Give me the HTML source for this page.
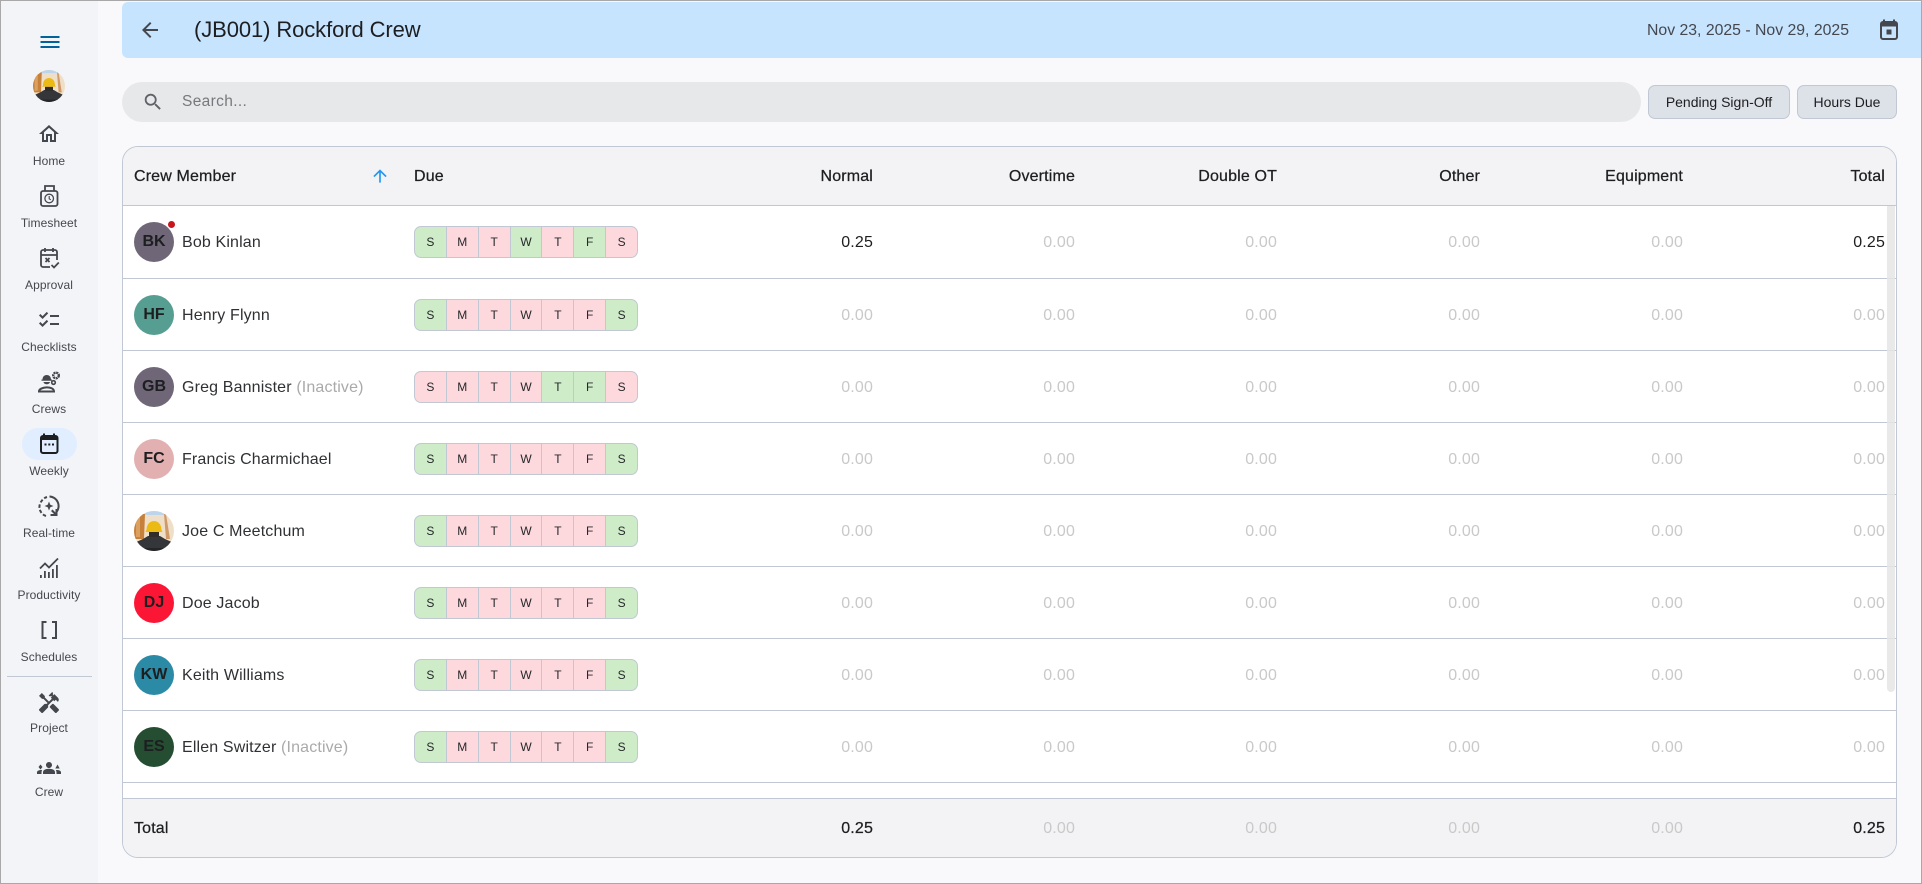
<!DOCTYPE html>
<html><head><meta charset="utf-8"><title>Weekly</title>
<style>
*{box-sizing:border-box}
html,body{margin:0;padding:0;width:1922px;height:884px;overflow:hidden;background:#f9f9fb;font-family:"Liberation Sans",sans-serif;color:#1d1e20}
.a{position:absolute}
#frame{position:absolute;left:0;top:0;width:1922px;height:884px;border:1px solid #a8a8a8;pointer-events:none;z-index:9}
#side{position:absolute;left:0;top:0;width:98px;height:884px;background:#f3f4f7}
.lab{position:absolute;left:0;width:98px;text-align:center;font-size:12px;line-height:14px;color:#44474e;letter-spacing:.08px;margin-top:1px}
.ic{position:absolute;left:37px;width:24px;height:24px;fill:#44474e}
.st{fill:none;stroke:#44474e;stroke-width:1.8}
#hd{position:absolute;left:122px;top:2px;width:1800px;height:56px;background:#c7e4ff;border-radius:6px 0 0 6px}
#tb{position:absolute;left:122px;top:146px;width:1775px;height:712px;border:1px solid #c1c8d3;border-radius:16px;background:#fff;overflow:hidden}
.hr{position:absolute;left:0;width:1775px;height:1px;background:#c1c8d3}
.row,.hrow{position:absolute;left:0;width:1773px;font-size:16px;letter-spacing:.15px}
.row{height:72px;line-height:74px}
.av{position:absolute;left:11px;top:16px;width:40px;height:40px;border-radius:50%;text-align:center;line-height:40px;font-size:16px;font-weight:700;letter-spacing:0;color:#1d1e20}
.nm{position:absolute;left:59px;top:0;white-space:nowrap;color:#303134;font-size:16px;letter-spacing:.15px}
.nm i{font-style:normal;color:#aaa}
.c{position:absolute;width:160px;text-align:right;color:#c9c9c9;top:0}
.c.d{color:#1d1e20}
.c1{left:590px}.c2{left:792px}.c3{left:994px}.c4{left:1197px}.c5{left:1400px}.c6{left:1602px}
.p{position:absolute;left:291px;top:20px;width:224px;height:32px;border:1px solid #c1c8d3;border-radius:7px;overflow:hidden;display:flex;line-height:31px;font-size:12px;letter-spacing:0;color:#26282b;background:#c1c8d3}
.p span{flex:1;text-align:center;background:#fdd9de;margin-right:1px}
.p span:last-child{margin-right:0}
.p .g{background:#ceecc8}
.hrow{height:58px;line-height:60px;color:#1d1e20;letter-spacing:.15px;-webkit-text-stroke:.25px #1d1e20}
.hrow .c{color:#1d1e20}
.hrow .z{color:#c9c9c9;-webkit-text-stroke:0}
.btn{position:absolute;top:85px;height:34px;line-height:32px;background:#dde1e8;border:1px solid #c1c8d3;border-radius:7px;text-align:center;font-size:14px;color:#1d1e20}
</style></head><body>

<svg width="0" height="0" style="position:absolute"><defs><clipPath id="cp"><circle cx="20" cy="20" r="20"/></clipPath>
<g id="ph"><g clip-path="url(#cp)"><rect width="40" height="40" fill="#f0dfc8"/><rect width="40" height="4" fill="#bcd5ea"/><path d="M0 3h11l-1 25H0z" fill="#c6803a"/><path d="M2 6h4v20H2z" fill="#dba060"/><path d="M30 3h2l4 25h-4z" fill="#cf9a6a"/><path d="M0 40V32l9-4 5-3h12l5 3 9 4v8z" fill="#34363a"/><path d="M0 40v-3h40v3z" fill="#232529"/><path d="M15 26h10v-5H15z" fill="#2f2c29"/><path d="M12.500 19c0-12 15-12 15 0l1 2H11.500z" fill="#ecba14"/></g></g></defs></svg>

<div id="side">
<svg class="ic" style="top:30px;left:37.500px;fill:#00639b" viewBox="0 0 24 24"><path d="M2.500 18h19v-2h-19zM2.500 13h19v-2h-19zM2.500 6v2h19V6z"/></svg>
<svg class="a" style="left:33px;top:70px" width="32" height="32" viewBox="0 0 40 40"><use href="#ph"/></svg>

<svg class="ic" style="top:122px" viewBox="0 0 24 24"><path d="M12 5.690l5 4.500V18h-2v-6H9v6H7v-7.810l5-4.500M12 3L2 12h3v8h6v-6h2v6h6v-8h3L12 3z"/></svg>
<div class="lab" style="top:153px">Home</div>

<svg class="ic" style="top:184px" viewBox="0 0 24 24"><rect x="4" y="7" width="16.500" height="15" rx="2" class="st"/><path d="M8 7V2h9v5" class="st"/><circle cx="12.200" cy="14.500" r="4.300" fill="none" stroke="#44474e" stroke-width="1.300"/><path d="M12.200 12v2.800l1.600 1" fill="none" stroke="#44474e" stroke-width="1.100"/></svg>
<div class="lab" style="top:215px">Timesheet</div>

<svg class="ic" style="top:246px" viewBox="0 0 24 24"><path d="M13 21H6a2 2 0 0 1-2-2V6a2 2 0 0 1 2-2h12a2 2 0 0 1 2 2v8M4 9h16M8 2v4M16 2v4" class="st"/><path d="M8.500 12l4 4m0-4l-4 4" class="st"/><path d="M14.500 19l2.500 2.500 4.800-5" class="st"/></svg>
<div class="lab" style="top:277px">Approval</div>

<svg class="ic" style="top:308px" viewBox="0 0 24 24"><path d="M22 7h-9v2h9V7zm0 8h-9v2h9v-2zM5.540 11L2 7.460l1.410-1.410 2.120 2.120 4.240-4.240 1.410 1.410L5.540 11zm0 8L2 15.460l1.410-1.410 2.120 2.120 4.240-4.240 1.410 1.410L5.540 19z"/></svg>
<div class="lab" style="top:339px">Checklists</div>

<svg class="ic" style="top:370px" viewBox="0 0 24 24"><path d="M5.500 9.500c0-6 8.500-6 8.500 0zM4.500 9.500h10.500v1.300H4.500zM6.500 12h6.500c-.5 3-6 3-6.500 0z"/><path d="M2 21.500c0-5 15-6 15 0z" fill="none" stroke="#44474e" stroke-width="2"/><circle cx="19" cy="5.500" r="2.800" fill="none" stroke="#44474e" stroke-width="2.400" stroke-dasharray="2 .6"/><circle cx="16.500" cy="12.500" r="1.800" fill="none" stroke="#44474e" stroke-width="1.600"/></svg>
<div class="lab" style="top:401px">Crews</div>

<div class="a" style="left:22px;top:428px;width:55px;height:32px;border-radius:16px;background:#e0eeff"></div>
<svg class="ic" style="top:432px" viewBox="0 0 24 24"><path d="M7 1.500v3.500M17 1.500v3.500" stroke="#1d1e20" stroke-width="2"/><rect x="4" y="4" width="16.500" height="17" rx="2" fill="none" stroke="#1d1e20" stroke-width="2"/><rect x="4" y="4" width="16.500" height="4" fill="#1d1e20"/><path d="M7.500 11.500h2v2h-2zM11.300 11.500h2v2h-2zM15 11.500h2v2h-2z" fill="#1d1e20"/></svg>
<div class="lab" style="top:463px">Weekly</div>

<svg class="ic" style="top:494px" viewBox="0 0 24 24"><path d="M12.500 2.500a9.500 9.500 0 0 1 6.500 16" fill="none" stroke="#44474e" stroke-width="2"/><path d="M9 22a9.500 9.500 0 0 1-4-15.500A9.500 9.500 0 0 1 10 3" fill="none" stroke="#44474e" stroke-width="2" stroke-dasharray="3.500 2"/><path d="M13.500 22h7v-7h-2v3.500l-3-3-1.500 1.500 3 3h-3.500zM12 7.500l1.300 3.200 3.200 1.300-3.200 1.300-1.300 3.200-1.300-3.200L7.500 12l3.200-1.300z"/></svg>
<div class="lab" style="top:525px">Real-time</div>

<svg class="ic" style="top:556px" viewBox="0 0 24 24"><path d="M3 12.500l5-5 4 4 9-9" fill="none" stroke="#44474e" stroke-width="1.800"/><path d="M3 19h1.800v3H3zM7 15h1.800v7H7zM11 16h1.800v6H11zM15 13h1.800v9H15zM19 9h1.800v13H19z"/></svg>
<div class="lab" style="top:587px">Productivity</div>

<svg class="ic" style="top:618px" viewBox="0 0 24 24"><path d="M9.500 4h-4v16h4M15 4h4v16h-4" fill="none" stroke="#44474e" stroke-width="2"/></svg>
<div class="lab" style="top:649px">Schedules</div>

<div class="a" style="left:7px;top:676px;width:85px;height:1px;background:#c1c8d3"></div>

<svg class="ic" style="top:691px" viewBox="0 0 24 24"><path d="M21.670 18.170l-5.300-5.300h-.99l-2.540 2.540v.99l5.300 5.300c.39.39 1.020.39 1.410 0l2.120-2.120c.39-.38.39-1.020 0-1.410z"/><path d="M17.340 10.190l1.410-1.410 2.120 2.120c1.170-1.170 1.170-3.070 0-4.240l-3.540-3.540-1.410 1.410V1.710l-.7-.71-3.540 3.540.71.71h2.830l-1.410 1.410 1.060 1.060-2.890 2.890-4.130-4.130V5.060L4.830 2.040 2 4.870 5.030 7.900h1.410l4.130 4.130-.85.85H7.600l-5.300 5.300c-.39.39-.39 1.020 0 1.410l2.120 2.120c.39.39 1.020.39 1.410 0l5.300-5.300v-2.120l5.150-5.150 1.060 1.050z"/></svg>
<div class="lab" style="top:720px">Project</div>

<svg class="ic" style="top:756px" viewBox="0 0 24 24"><path d="M3.500 8.500l2 2.500-2 2.500-2-2.500zM20.500 8.500l2.200 4h-4.400zM5.130 14.100c-.37-.06-.74-.1-1.130-.1-.99 0-1.930.21-2.780.58C.48 14.900 0 15.620 0 16.430V18h4.500v-1.610c0-.83.23-1.610.63-2.290zM24 16.430c0-.81-.48-1.530-1.220-1.850-.85-.37-1.790-.58-2.780-.58-.39 0-.76.04-1.130.1.4.68.63 1.460.63 2.290V18H24v-1.570zm-7.760-2.780c-1.170-.52-2.610-.9-4.240-.9-1.630 0-3.070.39-4.240.9C6.680 14.130 6 15.210 6 16.390V18h12v-1.610c0-1.180-.68-2.260-1.760-2.740zM12 12c1.660 0 3-1.340 3-3s-1.340-3-3-3-3 1.340-3 3 1.340 3 3 3z"/></svg>
<div class="lab" style="top:784px">Crew</div>
</div>

<div id="hd"></div>
<svg class="a" style="left:138px;top:18px;fill:#44474e" width="24" height="24" viewBox="0 0 24 24"><path d="M20 11H7.830l5.590-5.590L12 4l-8 8 8 8 1.410-1.410L7.830 13H20v-2z"/></svg>
<div class="a" style="left:194px;top:16px;font-size:22px;line-height:28px;color:#1d1e20;white-space:nowrap;letter-spacing:-.1px">(JB001) Rockford Crew</div>
<div class="a" style="left:1647px;top:21px;font-size:15.800px;line-height:20px;color:#44474e;white-space:nowrap">Nov 23, 2025 - Nov 29, 2025</div>
<svg class="a" style="left:1877px;top:18px" width="24" height="24" viewBox="0 0 24 24"><path d="M7 1.500v3.500M17 1.500v3.500" stroke="#44474e" stroke-width="2"/><rect x="4" y="4" width="16" height="17" rx="2" fill="none" stroke="#44474e" stroke-width="2"/><rect x="4" y="4" width="16" height="4.500" fill="#44474e"/><rect x="9.500" y="11.500" width="5" height="5" fill="#44474e"/></svg>

<div class="a" style="left:122px;top:82px;width:1519px;height:40px;border-radius:20px;background:#e7e8ea"></div>
<svg class="a" style="left:142px;top:91px;fill:#5f6266" width="22" height="22" viewBox="0 0 24 24"><path d="M15.500 14h-.79l-.28-.27C15.410 12.590 16 11.110 16 9.500 16 5.910 13.090 3 9.500 3S3 5.910 3 9.500 5.910 16 9.500 16c1.610 0 3.090-.59 4.230-1.570l.27.28v.79l5 4.990L20.490 19l-4.990-5zm-6 0C7.010 14 5 11.990 5 9.500S7.010 5 9.500 5 14 7.010 14 9.500 11.990 14 9.500 14z"/></svg>
<div class="a" style="left:182px;top:92px;font-size:15.500px;line-height:20px;color:#77797c;letter-spacing:.35px">Search...</div>
<div class="btn" style="left:1648px;width:142px">Pending Sign-Off</div>
<div class="btn" style="left:1797px;width:100px">Hours Due</div>

<div id="tb">
<div class="a" style="left:0;top:0;width:1775px;height:58px;background:#f3f3f5"></div>
<div class="hrow" style="top:0">
<span class="a" style="left:11px;white-space:nowrap">Crew Member</span>
<span class="a" style="left:291px">Due</span>
<div class="c c1">Normal</div><div class="c c2">Overtime</div><div class="c c3">Double OT</div><div class="c c4">Other</div><div class="c c5">Equipment</div><div class="c c6">Total</div>
</div>
<svg class="a" style="left:247px;top:19px;fill:#2196f3" width="20" height="20" viewBox="0 0 24 24"><path d="M4 12l1.410 1.410L11 7.830V20h2V7.830l5.580 5.590L20 12l-8-8-8 8z"/></svg>
<div class="hr" style="top:58px"></div>

<div class="row" style="top:59px"><div class="av" style="background:#6f6677">BK</div><div class="a" style="left:45px;top:15px;width:7px;height:7px;border-radius:50%;background:#c8161d"></div><div class="nm">Bob Kinlan</div>
<div class="p"><span class="g">S</span><span>M</span><span>T</span><span class="g">W</span><span>T</span><span class="g">F</span><span>S</span></div>
<div class="c c1 d">0.25</div><div class="c c2">0.00</div><div class="c c3">0.00</div><div class="c c4">0.00</div><div class="c c5">0.00</div><div class="c c6 d">0.25</div></div>
<div class="hr" style="top:131px"></div>

<div class="row" style="top:132px"><div class="av" style="background:#559e91">HF</div><div class="nm">Henry Flynn</div>
<div class="p"><span class="g">S</span><span>M</span><span>T</span><span>W</span><span>T</span><span>F</span><span class="g">S</span></div>
<div class="c c1">0.00</div><div class="c c2">0.00</div><div class="c c3">0.00</div><div class="c c4">0.00</div><div class="c c5">0.00</div><div class="c c6">0.00</div></div>
<div class="hr" style="top:203px"></div>

<div class="row" style="top:204px"><div class="av" style="background:#6f6677">GB</div><div class="nm">Greg Bannister <i>(Inactive)</i></div>
<div class="p"><span>S</span><span>M</span><span>T</span><span>W</span><span class="g">T</span><span class="g">F</span><span>S</span></div>
<div class="c c1">0.00</div><div class="c c2">0.00</div><div class="c c3">0.00</div><div class="c c4">0.00</div><div class="c c5">0.00</div><div class="c c6">0.00</div></div>
<div class="hr" style="top:275px"></div>

<div class="row" style="top:276px"><div class="av" style="background:#e2b0b0">FC</div><div class="nm">Francis Charmichael</div>
<div class="p"><span class="g">S</span><span>M</span><span>T</span><span>W</span><span>T</span><span>F</span><span class="g">S</span></div>
<div class="c c1">0.00</div><div class="c c2">0.00</div><div class="c c3">0.00</div><div class="c c4">0.00</div><div class="c c5">0.00</div><div class="c c6">0.00</div></div>
<div class="hr" style="top:347px"></div>

<div class="row" style="top:348px"><svg class="a" style="left:11px;top:16px" width="40" height="40" viewBox="0 0 40 40"><use href="#ph"/></svg><div class="nm">Joe C Meetchum</div>
<div class="p"><span class="g">S</span><span>M</span><span>T</span><span>W</span><span>T</span><span>F</span><span class="g">S</span></div>
<div class="c c1">0.00</div><div class="c c2">0.00</div><div class="c c3">0.00</div><div class="c c4">0.00</div><div class="c c5">0.00</div><div class="c c6">0.00</div></div>
<div class="hr" style="top:419px"></div>

<div class="row" style="top:420px"><div class="av" style="background:#fc1636">DJ</div><div class="nm">Doe Jacob</div>
<div class="p"><span class="g">S</span><span>M</span><span>T</span><span>W</span><span>T</span><span>F</span><span class="g">S</span></div>
<div class="c c1">0.00</div><div class="c c2">0.00</div><div class="c c3">0.00</div><div class="c c4">0.00</div><div class="c c5">0.00</div><div class="c c6">0.00</div></div>
<div class="hr" style="top:491px"></div>

<div class="row" style="top:492px"><div class="av" style="background:#2b8aa6">KW</div><div class="nm">Keith Williams</div>
<div class="p"><span class="g">S</span><span>M</span><span>T</span><span>W</span><span>T</span><span>F</span><span class="g">S</span></div>
<div class="c c1">0.00</div><div class="c c2">0.00</div><div class="c c3">0.00</div><div class="c c4">0.00</div><div class="c c5">0.00</div><div class="c c6">0.00</div></div>
<div class="hr" style="top:563px"></div>

<div class="row" style="top:564px"><div class="av" style="background:#254d31">ES</div><div class="nm">Ellen Switzer <i>(Inactive)</i></div>
<div class="p"><span class="g">S</span><span>M</span><span>T</span><span>W</span><span>T</span><span>F</span><span class="g">S</span></div>
<div class="c c1">0.00</div><div class="c c2">0.00</div><div class="c c3">0.00</div><div class="c c4">0.00</div><div class="c c5">0.00</div><div class="c c6">0.00</div></div>
<div class="hr" style="top:635px"></div>

<div class="a" style="left:1764px;top:59px;width:8px;height:486px;background:#e5e5e5;opacity:.85;border-radius:0 0 4px 4px"></div>

<div class="a" style="left:0;top:651px;width:1775px;height:60px;background:#f3f3f5;border-top:1px solid #c1c8d3"></div>
<div class="hrow" style="top:652px;height:58px">
<span class="a" style="left:11px">Total</span>
<div class="c c1 d">0.25</div><div class="c c2 z">0.00</div><div class="c c3 z">0.00</div><div class="c c4 z">0.00</div><div class="c c5 z">0.00</div><div class="c c6 d">0.25</div>
</div>
</div>

<div id="frame"></div>
</body></html>
